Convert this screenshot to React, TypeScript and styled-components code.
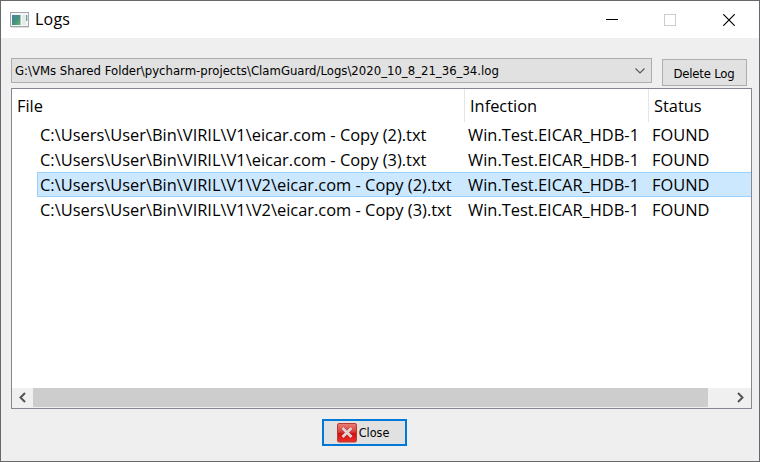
import React from "react";
import styled, { createGlobalStyle } from "styled-components";

const GlobalStyle = createGlobalStyle`
  * { box-sizing: border-box; }
  html, body { margin: 0; padding: 0; overflow: hidden; }
  svg { display: block; flex: none; }
`;

const Window = styled.div`
  width: 760px;
  height: 462px;
  display: flex;
  flex-direction: column;
  background: #efefef;
  border: 1px solid #67686a;
  color: #000;
  font-family: "Open Sans", "Noto Sans", sans-serif;
`;

const TitleBar = styled.header`
  height: 37px;
  flex: none;
  display: flex;
  align-items: center;
  background: #fff;
  padding: 0 1px 0 9px;
`;

const Title = styled.h1`
  margin: -2px auto 0 6px;
  font-size: 16px;
  line-height: 20px;
  font-weight: 400;
  letter-spacing: 0.2px;
`;

const CaptionButton = styled.button`
  width: 58.5px;
  height: 37px;
  border: 0;
  padding: 0;
  background: none;
  display: flex;
  align-items: center;
  justify-content: center;
`;

const Toolbar = styled.div`
  flex: none;
  height: 50px;
  display: flex;
  align-items: flex-start;
  gap: 10px;
  padding: 20px 12px 0 10px;
`;

const LogSelect = styled.div`
  width: 641px;
  height: 25px;
  display: flex;
  align-items: center;
  justify-content: space-between;
  background: #e1e1e1;
  border: 1px solid #adadad;
  padding: 0 6px 0 3px;
  white-space: nowrap;
`;

const SmallText = styled.span<{ $size: number; $spacing?: number }>`
  font-family: "DejaVu Sans Condensed", "DejaVu Sans", sans-serif;
  font-stretch: condensed;
  font-size: ${(p) => p.$size}px;
  line-height: 16px;
  letter-spacing: ${(p) => p.$spacing ?? 0}px;
`;

const PushButton = styled.button<{ $primary?: boolean }>`
  width: 85px;
  height: 27px;
  margin-top: ${(p) => (p.$primary ? 0 : 1)}px;
  padding: ${(p) => (p.$primary ? "1px 3px 0 0" : "2px 1px 0 0")};
  display: flex;
  align-items: center;
  justify-content: center;
  gap: 2px;
  color: #000;
  white-space: nowrap;
  background: #e1e1e1;
  border: ${(p) => (p.$primary ? "2px solid #0078d7" : "1px solid #adadad")};
`;

const Tree = styled.main`
  width: 741px;
  height: 321px;
  flex: none;
  margin-left: 10px;
  display: flex;
  flex-direction: column;
  background: #fff;
  border: 1px solid #828790;
`;

const HeaderRow = styled.div`
  height: 33px;
  flex: none;
  display: grid;
  grid-template-columns: 453px 184px 1fr;
`;

const HeaderCell = styled.div<{ $last?: boolean }>`
  padding: 5px 0 0 5px;
  font-size: 16.4px;
  line-height: 24px;
  border-right: ${(p) => (p.$last ? 0 : 1)}px solid #e5e5e5;
`;

const Rows = styled.div`
  flex: 1;
  padding-left: 25px;
`;

const Row = styled.div<{ $selected?: boolean }>`
  height: 25px;
  display: grid;
  grid-template-columns: 428px 184px 1fr;
  border: 1px solid ${(p) => (p.$selected ? "#99d1ff" : "transparent")};
  border-right: 0;
  background: ${(p) => (p.$selected ? "#cce8ff" : "transparent")};
`;

const Cell = styled.div`
  padding-left: 2px;
  font-size: 16.43px;
  line-height: 23px;
  white-space: nowrap;
`;

const ScrollBar = styled.div`
  height: 20px;
  flex: none;
  padding-bottom: 1px;
  display: flex;
  background: #f0f0f0;
`;

const ScrollArrow = styled.div`
  width: 21px;
  display: flex;
  align-items: center;
  justify-content: center;
`;

const ScrollTrack = styled.div`
  flex: 1;
`;

const ScrollThumb = styled.div`
  width: 675px;
  height: 19px;
  background: #cdcdcd;
`;

const Footer = styled.footer`
  display: flex;
  padding: 10px 0 0 321px;
`;

const AppIcon = () => (
  <svg width="19" height="16" viewBox="0 0 19 16">
    <defs>
      <linearGradient id="screen" x1="0" y1="0" x2="1" y2="1">
        <stop offset="0" stopColor="#4583a6" />
        <stop offset=".5" stopColor="#459080" />
        <stop offset="1" stopColor="#63b673" />
      </linearGradient>
    </defs>
    <rect x=".5" y=".5" width="18" height="14" fill="#f6f6f6" stroke="#a3a7aa" />
    <path d="M1 15.5H19" stroke="#dcdedf" />
    <rect x="2" y="3" width="8.5" height="10" fill="url(#screen)" />
    <rect x="12" y="3" width="4" height="10" fill="#e8eaeb" />
    <rect x="16" y="3" width="1.3" height="6" fill="#65a5a0" />
  </svg>
);

const CloseIcon = () => (
  <svg width="20" height="20" viewBox="0 0 20 20">
    <defs>
      <linearGradient id="red" x1="0" y1="0" x2="0" y2="1">
        <stop offset="0" stopColor="#e98078" />
        <stop offset=".48" stopColor="#d83a34" />
        <stop offset=".52" stopColor="#cf0d0d" />
        <stop offset="1" stopColor="#ee3029" />
      </linearGradient>
    </defs>
    <rect x=".5" y=".5" width="19" height="18.5" rx="1.5" fill="url(#red)" stroke="#b93934" />
    <path d="M5.5 5L14.5 14M14.5 5L5.5 14" stroke="#b83a35" strokeWidth="3.8" />
    <path d="M5.5 5L14.5 14M14.5 5L5.5 14" stroke="#e3d5d5" strokeWidth="2.6" />
  </svg>
);

const Chevron = ({ d }: { d: string }) => (
  <svg width="9" height="11" viewBox="0 0 9 11">
    <path d={d} fill="none" stroke="#555" strokeWidth="2" />
  </svg>
);

const rows = [
  { file: "C:\\Users\\User\\Bin\\VIRIL\\V1\\eicar.com - Copy (2).txt" },
  { file: "C:\\Users\\User\\Bin\\VIRIL\\V1\\eicar.com - Copy (3).txt" },
  { file: "C:\\Users\\User\\Bin\\VIRIL\\V1\\V2\\eicar.com - Copy (2).txt", selected: true },
  { file: "C:\\Users\\User\\Bin\\VIRIL\\V1\\V2\\eicar.com - Copy (3).txt" },
];

export default function App() {
  return (
    <Window>
      <GlobalStyle />
      <TitleBar>
        <AppIcon />
        <Title>Logs</Title>
        <CaptionButton aria-label="Minimize">
          <svg width="12" height="12"><path d="M0 5.5H12" stroke="#000" /></svg>
        </CaptionButton>
        <CaptionButton aria-label="Maximize">
          <svg width="12" height="12"><rect x=".5" y=".5" width="11" height="11" fill="none" stroke="#ccc" /></svg>
        </CaptionButton>
        <CaptionButton aria-label="Close window">
          <svg width="12" height="12"><path d="M.3 .3L11.7 11.7M11.7 .3L.3 11.7" stroke="#000" strokeWidth="1.2" /></svg>
        </CaptionButton>
      </TitleBar>
      <Toolbar>
        <LogSelect>
          <SmallText $size={13}>
            G:\VMs Shared Folder\pycharm-projects\ClamGuard/Logs\2020_10_8_21_36_34.log
          </SmallText>
          <svg width="10" height="6"><path d="M.5 .5L5 5L9.5 .5" fill="none" stroke="#555" strokeWidth="1.1" /></svg>
        </LogSelect>
        <PushButton><SmallText $size={13} $spacing={-0.2}>Delete Log</SmallText></PushButton>
      </Toolbar>
      <Tree>
        <HeaderRow>
          <HeaderCell>File</HeaderCell>
          <HeaderCell>Infection</HeaderCell>
          <HeaderCell $last>Status</HeaderCell>
        </HeaderRow>
        <Rows>
          {rows.map((row) => (
            <Row key={row.file} $selected={row.selected}>
              <Cell>{row.file}</Cell>
              <Cell>Win.Test.EICAR_HDB-1</Cell>
              <Cell>FOUND</Cell>
            </Row>
          ))}
        </Rows>
        <ScrollBar>
          <ScrollArrow><Chevron d="M7 1L2.5 5.5L7 10" /></ScrollArrow>
          <ScrollTrack><ScrollThumb /></ScrollTrack>
          <ScrollArrow><Chevron d="M2 1L6.5 5.5L2 10" /></ScrollArrow>
        </ScrollBar>
      </Tree>
      <Footer>
        <PushButton $primary>
          <CloseIcon />
          <SmallText $size={12.5}>Close</SmallText>
        </PushButton>
      </Footer>
    </Window>
  );
}
